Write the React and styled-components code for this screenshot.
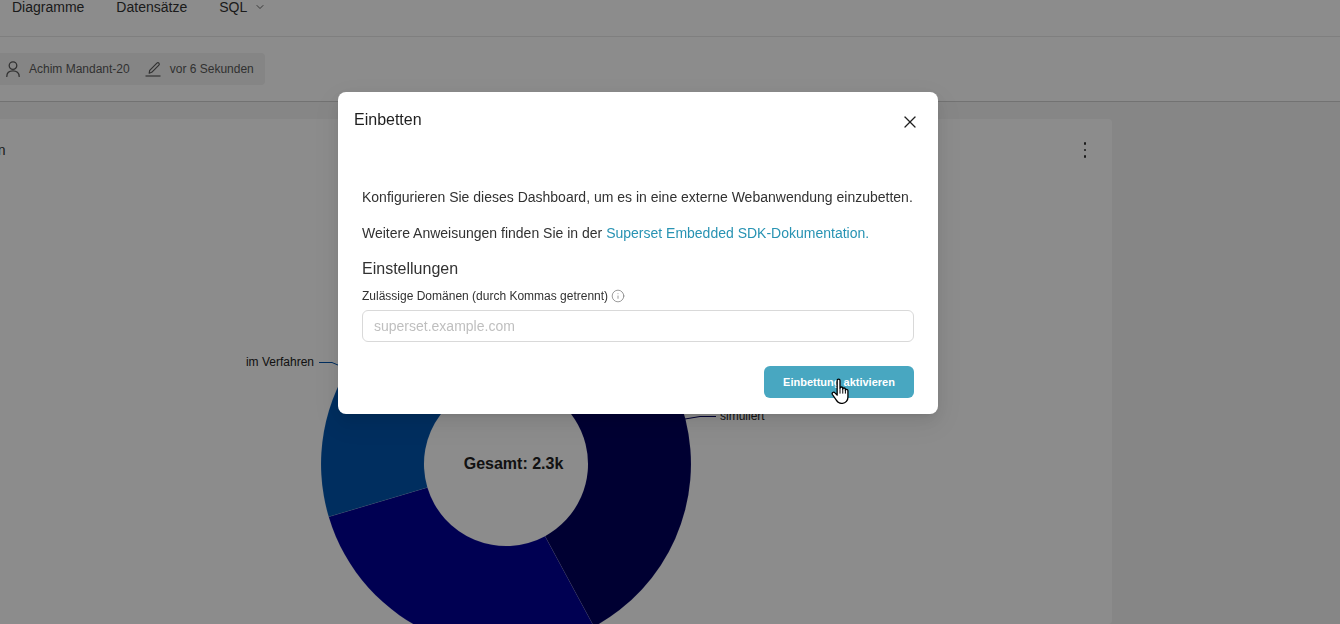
import React from 'react'
import styled, { createGlobalStyle } from 'styled-components'
import { ChevronDown, Info, X } from 'lucide-react'

const GlobalStyle = createGlobalStyle`
    html, body {
        margin: 0;
        height: 100%;
        overflow: hidden;
        font-family: "Liberation Sans", Arial, sans-serif;
        color: #323232;
    }
`

const CENTER_X = 506
const CENTER_Y = 464
const OUTER_RADIUS = 185
const INNER_RADIUS = 82

const slices = [
    { from: 0.4, to: 151.6, color: '#00005c' },
    { from: 151.6, to: 253.4, color: '#000096' },
    { from: 253.4, to: 360.4, color: '#0054ad' },
]

const point = (radius, angle) => {
    const rad = (angle * Math.PI) / 180
    return `${CENTER_X + radius * Math.sin(rad)} ${CENTER_Y - radius * Math.cos(rad)}`
}

const slicePath = ({ from, to }) => {
    const large = to - from > 180 ? 1 : 0
    return [
        `M ${point(OUTER_RADIUS, from)}`,
        `A ${OUTER_RADIUS} ${OUTER_RADIUS} 0 ${large} 1 ${point(OUTER_RADIUS, to)}`,
        `L ${point(INNER_RADIUS, to)}`,
        `A ${INNER_RADIUS} ${INNER_RADIUS} 0 ${large} 0 ${point(INNER_RADIUS, from)}`,
        'Z',
    ].join(' ')
}

const UserIcon = () => (
    <svg width="14" height="16" viewBox="0 0 14 16" fill="none" stroke="currentColor" strokeWidth="1.3">
        <circle cx="7" cy="4.600" r="3.800" />
        <path d="M0.800 15.500c0-3.600 2.700-5.600 6.200-5.600s6.200 2 6.200 5.600" strokeLinecap="round" />
    </svg>
)

const EditIcon = () => (
    <svg width="16" height="16" viewBox="0 0 16 16" fill="none" stroke="currentColor" strokeWidth="1.2">
        <path d="M0.500 15h15" />
        <path d="M4.200 12.200l0.500-2.900 7.200-7.200c0.600-0.600 1.500-0.600 2 0s0.600 1.400 0 2l-7.200 7.200z" strokeLinejoin="round" />
    </svg>
)

const App = () => (
    <>
        <GlobalStyle />
        <Page>
            <Nav>
                <NavItem>Diagramme</NavItem>
                <NavItem>Datensätze</NavItem>
                <NavItem>
                    SQL
                    <ChevronDown size={12} strokeWidth={1.5} />
                </NavItem>
            </Nav>
            <TitleBar>
                <MetaChip>
                    <MetaItem>
                        <UserIcon />
                        Achim Mandant-20
                    </MetaItem>
                    <MetaItem>
                        <EditIcon />
                        vor 6 Sekunden
                    </MetaItem>
                </MetaChip>
            </TitleBar>
            <Main>
                <ChartCard>
                    <ChartHeader>
                        <ChartTitle>Anwendungen</ChartTitle>
                        <MenuDots>
                            <span />
                            <span />
                            <span />
                        </MenuDots>
                    </ChartHeader>
                    <ChartCanvas>
                        <svg width="1340" height="624" viewBox="0 0 1340 624">
                            {slices.map(slice => (
                                <path
                                    key={slice.from}
                                    d={slicePath(slice)}
                                    fill={slice.color}
                                    stroke="#ffffff"
                                    strokeOpacity="0.2"
                                    strokeWidth="0.5"
                                />
                            ))}
                            <polyline
                                points="319,362.500 332,362.500 345,368"
                                fill="none"
                                stroke="#0054ad"
                            />
                            <polyline
                                points="685,419 700,416.500 716,416.500"
                                fill="none"
                                stroke="#00005c"
                            />
                            <ChartLabel x="314" y="366" textAnchor="end">
                                im Verfahren
                            </ChartLabel>
                            <ChartLabel x="720" y="420">
                                simuliert
                            </ChartLabel>
                            <ChartTotal x="513.5" y="468.500" textAnchor="middle">
                                Gesamt: 2.3k
                            </ChartTotal>
                        </svg>
                    </ChartCanvas>
                </ChartCard>
            </Main>
        </Page>
        <Mask />
        <ModalLayer>
            <Modal>
                <ModalHeader>
                    <ModalTitle>Einbetten</ModalTitle>
                    <CloseButton>
                        <X size={20} strokeWidth={1.5} />
                    </CloseButton>
                </ModalHeader>
                <ModalBody>
                    <Paragraph>
                        Konfigurieren Sie dieses Dashboard, um es in eine externe Webanwendung einzubetten.
                    </Paragraph>
                    <Paragraph>
                        Weitere Anweisungen finden Sie in der{' '}
                        <DocLink>Superset Embedded SDK-Dokumentation.</DocLink>
                    </Paragraph>
                    <SectionTitle>Einstellungen</SectionTitle>
                    <FieldLabel>
                        Zulässige Domänen (durch Kommas getrennt)
                        <Info size={14} strokeWidth={1.25} />
                    </FieldLabel>
                    <Input placeholder="superset.example.com" readOnly />
                    <ModalFooter>
                        <EnableButton>
                            Einbettung aktivieren
                            <HandCursor viewBox="0 0 18 25" width="20" height="27.500">
                                <path
                                    d="M5.5 2.2c0-1.6 2.6-1.6 2.6 0v7c.1-1.4 2.5-1.4 2.5.2v.6c.2-1.3 2.4-1.2 2.4.4v.7c.3-1.1 2.3-1 2.3.6v5.8c0 2.800-2 5.500-4.900 5.500H9.200c-2 0-3.200-.9-4.300-2.600L1.200 15c-.9-1.500 1.100-2.900 2.300-1.500l2 2.100z"
                                    fill="#ffffff"
                                    stroke="#000000"
                                    strokeWidth="1.2"
                                    strokeLinejoin="round"
                                />
                                <path
                                    d="M8.100 9.200v5M10.600 10v4.200M13 11v3.200"
                                    fill="none"
                                    stroke="#000000"
                                    strokeWidth="0.9"
                                />
                            </HandCursor>
                        </EnableButton>
                    </ModalFooter>
                </ModalBody>
            </Modal>
        </ModalLayer>
    </>
)

const Page = styled.div`
    height: 100vh;
    overflow: hidden;
    display: flex;
    flex-flow: column nowrap;
    background: #f5f5f5;
`

const Nav = styled.nav`
    flex: none;
    display: flex;
    align-items: center;
    gap: 32px;
    height: 58px;
    margin-top: -22px;
    padding-left: 12px;
    background: #ffffff;
    border-bottom: 1px solid #e8e8e8;
`

const NavItem = styled.div`
    display: flex;
    align-items: center;
    gap: 7px;
    font-size: 14px;
    color: #323232;
`

const TitleBar = styled.div`
    flex: none;
    display: flex;
    align-items: center;
    height: 64px;
    background: #ffffff;
    border-bottom: 1px solid #d0d0d0;
`

const MetaChip = styled.div`
    display: flex;
    align-items: center;
    gap: 15px;
    height: 32px;
    margin-left: -10px;
    padding: 0 11px 0 16px;
    background: #f3f3f3;
    border-radius: 4px;
`

const MetaItem = styled.div`
    display: flex;
    align-items: center;
    gap: 9px;
    font-size: 12px;
    color: #5a5a5a;
`

const Main = styled.main`
    flex: 1;
    min-height: 0;
    padding-top: 17px;
`

const ChartCard = styled.section`
    position: relative;
    width: 1132px;
    height: 100%;
    margin-left: -20px;
    background: #ffffff;
    border-radius: 4px;
`

const ChartHeader = styled.div`
    display: flex;
    align-items: center;
    justify-content: space-between;
    height: 62px;
    padding-right: 26px;
`

const ChartTitle = styled.h2`
    margin: 0 0 0 -64px;
    font-size: 14px;
    font-weight: 400;
    color: #323232;
`

const MenuDots = styled.div`
    display: flex;
    flex-flow: column nowrap;
    align-items: center;
    gap: 4px;

    span {
        display: block;
        width: 2.500px;
        height: 2.500px;
        border-radius: 50%;
        background: #323232;
    }
`

const ChartCanvas = styled.div`
    position: absolute;
    left: 20px;
    top: -119px;

    svg {
        display: block;
    }
`

const ChartLabel = styled.text`
    font-size: 12px;
    fill: #222222;
`

const ChartTotal = styled.text`
    font-size: 16px;
    font-weight: 700;
    fill: #222222;
`

const Mask = styled.div`
    position: fixed;
    inset: 0;
    background: rgba(0, 0, 0, 0.45);
`

const ModalLayer = styled.div`
    position: fixed;
    inset: 0;
    display: flex;
    align-items: flex-start;
    padding: 92px 0 0 338px;
`

const Modal = styled.div`
    width: 600px;
    height: 322px;
    box-sizing: border-box;
    background: #ffffff;
    border-radius: 8px;
    box-shadow: 0 6px 16px 0 rgba(0, 0, 0, 0.08), 0 3px 6px -4px rgba(0, 0, 0, 0.12),
        0 9px 28px 8px rgba(0, 0, 0, 0.05);
`

const ModalHeader = styled.div`
    display: flex;
    justify-content: space-between;
    height: 78px;
    padding: 17px 18px 0 16px;
`

const ModalTitle = styled.div`
    font-size: 16px;
    line-height: 22px;
    color: #1f1f1f;
`

const CloseButton = styled.div`
    display: flex;
    height: 20px;
    margin-top: 3px;
    color: #1f1f1f;
`

const ModalBody = styled.div`
    padding: 0 24px;
`

const Paragraph = styled.p`
    margin: 0 0 16px;
    font-size: 14px;
    line-height: 20px;
    color: #323232;

    & + h3 {
        margin-top: -1px;
    }
`

const DocLink = styled.a`
    color: #2893b3;
`

const SectionTitle = styled.h3`
    margin: 0;
    font-size: 16px;
    font-weight: 400;
    line-height: 22px;
    color: #323232;
`

const FieldLabel = styled.label`
    display: flex;
    align-items: center;
    gap: 3px;
    height: 16px;
    margin: 8px 0 6px;
    font-size: 12px;
    line-height: 16px;
    color: #323232;

    svg {
        color: #777777;
    }
`

const Input = styled.input`
    display: block;
    width: 100%;
    height: 32px;
    box-sizing: border-box;
    padding: 0 11px;
    font-family: inherit;
    font-size: 14px;
    color: #323232;
    background: #ffffff;
    border: 1px solid #d9d9d9;
    border-radius: 6px;
    outline: none;

    &::placeholder {
        color: #bfbfbf;
    }
`

const ModalFooter = styled.div`
    display: flex;
    justify-content: flex-end;
    margin-top: 24px;
`

const EnableButton = styled.button`
    position: relative;
    width: 150px;
    height: 32px;
    padding: 0;
    font-family: inherit;
    font-size: 11px;
    font-weight: 700;
    color: #ffffff;
    background: #48a7c1;
    border: none;
    border-radius: 6px;
`

const HandCursor = styled.svg`
    position: absolute;
    left: 67px;
    top: 12px;
`

export default App
